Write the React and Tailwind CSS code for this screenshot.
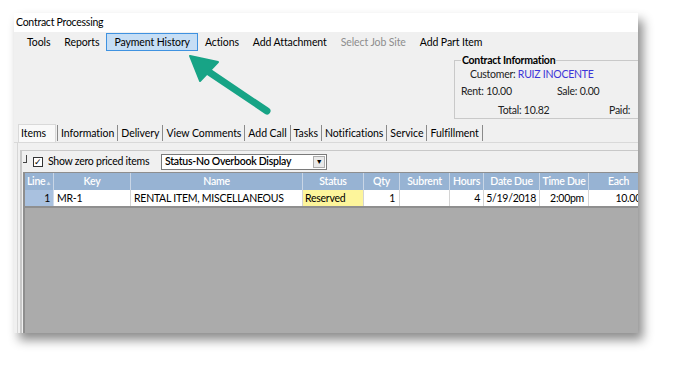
const FONT = { fontFamily: '"Segoe UI", Lato, "Noto Sans", sans-serif' }

const MENU = [
  { label: 'Tools' },
  { label: 'Reports' },
  { label: 'Payment History', active: true },
  { label: 'Actions' },
  { label: 'Add Attachment' },
  { label: 'Select Job Site', disabled: true },
  { label: 'Add Part Item' },
]

const TABS = ['Information', 'Delivery', 'View Comments', 'Add Call', 'Tasks', 'Notifications', 'Service', 'Fulfillment']

const COLS = [
  { name: 'Line', w: 29 },
  { name: 'Key', w: 77 },
  { name: 'Name', w: 172 },
  { name: 'Status', w: 61 },
  { name: 'Qty', w: 36 },
  { name: 'Subrent', w: 50 },
  { name: 'Hours', w: 34 },
  { name: 'Date Due', w: 56 },
  { name: 'Time Due', w: 49 },
  { name: 'Each', w: 60 },
]

function Arrow() {
  return (
    <svg className="pointer-events-none absolute left-0 top-0" width="673" height="368">
      <line x1="267" y1="111" x2="203" y2="68" stroke="#17a486" strokeWidth="7" strokeLinecap="round" />
      <polygon points="190,56 218,62 200,81" fill="#17a486" stroke="#17a486" strokeWidth="2" strokeLinejoin="round" />
    </svg>
  )
}

function InfoBox() {
  return (
    <fieldset className="ml-auto mr-[-40px] mt-[2px] h-[66px] w-[224px] border border-[#c9c9c9] px-[6px] pt-0 text-[10.5px] leading-[14px]">
      <legend className="px-[1px] font-bold text-black">Contract Information</legend>
      <div className="pl-[9px] text-[#222]">
        Customer: <span className="text-[#3d35d8]">RUIZ INOCENTE</span>
      </div>
      <div className="mt-[3px] flex text-[#222]">
        <span className="w-[96px]">Rent: 10.00</span>
        <span>Sale: 0.00</span>
      </div>
      <div className="mt-[5px] flex text-[#222]">
        <span className="w-[148px] pl-[37px]">Total: 10.82</span>
        <span>Paid:</span>
      </div>
    </fieldset>
  )
}

function Grid() {
  return (
    <div className="ml-[1px] flex flex-1 flex-col border-l-2 border-t border-[#8e8e8e] bg-[#ababab]">
      <div className="flex h-[17px] bg-[#97b3d3] text-[10.5px] font-semibold leading-[17px] text-white">
        {COLS.map((c) => (
          <div key={c.name} style={{ width: c.w }} className="shrink-0 border-r border-[#c9d6e6] text-center">
            {c.name === 'Line' ? <span>Line<span className="text-[6px] text-[#d7e2ef]">▲</span></span> : c.name}
          </div>
        ))}
      </div>
      <div className="flex h-[18px] border-b-2 border-[#8f8f8f] text-[10.5px] leading-[17px] text-black">
        <div style={{ width: 29 }} className="shrink-0 border-r border-[#cfdbe9] bg-[#a9c1df] pr-[3px] text-right">1</div>
        <div style={{ width: 77 }} className="shrink-0 border-r border-[#d4d4d4] bg-white pl-[3px]">MR-1</div>
        <div style={{ width: 172 }} className="shrink-0 border-r border-[#d4d4d4] bg-white pl-[3px]">RENTAL ITEM, MISCELLANEOUS</div>
        <div style={{ width: 61 }} className="shrink-0 border-r border-[#d4d4d4] bg-[#fdf59b] pl-[2px]">Reserved</div>
        <div style={{ width: 36 }} className="shrink-0 border-r border-[#d4d4d4] bg-white pr-[4px] text-right">1</div>
        <div style={{ width: 50 }} className="shrink-0 border-r border-[#d4d4d4] bg-white" />
        <div style={{ width: 34 }} className="shrink-0 border-r border-[#d4d4d4] bg-white pr-[3px] text-right">4</div>
        <div style={{ width: 56 }} className="shrink-0 border-r border-[#d4d4d4] bg-white pr-[3px] text-right">5/19/2018</div>
        <div style={{ width: 49 }} className="shrink-0 border-r border-[#d4d4d4] bg-white pr-[4px] text-right">2:00pm</div>
        <div style={{ width: 60 }} className="shrink-0 bg-white pr-[8px] text-right">10.00</div>
      </div>
    </div>
  )
}

export default function App() {
  return (
    <div className="relative h-[368px] w-[673px] overflow-hidden bg-white" style={FONT}>
      {/* window */}
      <div className="ml-[14px] mt-[13px] flex h-[320px] w-[624px] flex-col overflow-hidden bg-[#f0f0f0] tracking-[-0.25px] shadow-[5px_7px_10px_rgba(0,0,0,0.45)]">
        <div className="h-[19px] bg-white pl-[2px] text-[10.5px] leading-[18px] text-black">Contract Processing</div>

        {/* menu bar */}
        <div className="mt-[1px] flex h-[18px] items-center pl-[6px] text-[10.5px] tracking-[-0.1px] text-black">
          {MENU.map((m) => (
            <span
              key={m.label}
              className={
                m.active
                  ? 'h-[18px] border border-[#3f92e0] bg-[#c6def5] px-[7px] leading-[16px]'
                  : 'px-[7px] leading-[18px] ' + (m.disabled ? 'text-[#8d8d8d]' : '')
              }
            >
              {m.label}
            </span>
          ))}
        </div>

        {/* header area with contract info */}
        <div className="flex h-[73px]">
          <InfoBox />
        </div>

        {/* tab strip */}
        <div className="flex h-[19px] items-end border-b border-[#d9d9d9] pl-[4px] text-[10.5px] leading-[16px] tracking-[-0.05px] text-black">
          <div className="h-[18px] border border-b-0 border-[#d9d9d9] bg-[#f9f9f9] pl-[2px] pr-[9px]">Items</div>
          {TABS.map((t, i) => (
            <div
              key={t}
              className={(i === 0 ? 'ml-[1px] border-l ' : '') + 'mb-[1px] border-r border-[#8a8a8a] px-[3px]'}
            >
              {t}
            </div>
          ))}
        </div>

        {/* tab page */}
        <div className="ml-[3px] flex flex-1 flex-col border-l border-[#d6d6d6] pt-[7px]">
          <div className="ml-[2px] flex flex-1 flex-col border-l-2 border-t border-[#c8c8c8]">
            <div className="flex h-[21px] items-center text-[10.5px] text-black">
              <span className="ml-[1px] mt-[-6px] h-[8px] w-[4px] border-b border-r border-[#444]" />
              <span className="ml-[6px] flex h-[10px] w-[10px] items-center justify-center border border-[#333] bg-white text-[9px] leading-none">✓</span>
              <span className="ml-[5px] w-[113px]">Show zero priced items</span>
              <div className="flex h-[16px] w-[166px] items-center border border-[#7a7a7a] bg-white pl-[3px] font-semibold">
                <span className="flex-1">Status-No Overbook Display</span>
                <span className="mr-[1px] flex h-[12px] w-[12px] items-center justify-center border border-[#acacac] bg-[#e9e9e9] text-[7px]">▼</span>
              </div>
            </div>
            <Grid />
          </div>
        </div>
      </div>
      <Arrow />
    </div>
  )
}
